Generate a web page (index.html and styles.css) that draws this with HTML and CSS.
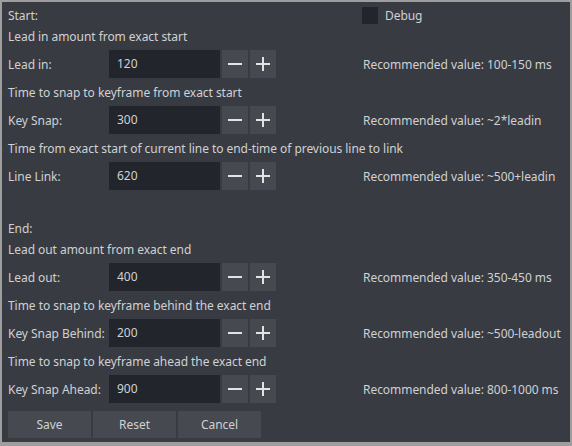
FILE: index.html
```html
<!DOCTYPE html>
<html>
<head>
<meta charset="utf-8">
<link rel="stylesheet" href="styles.css">
</head>
<body>
<div class="panel">
  <div class="head-row">
    <span class="label">Start:</span>
    <span class="check"><span class="box"></span><span class="check-text">Debug</span></span>
  </div>
  <div class="text">Lead in amount from exact start</div>
  <div class="row">
    <span class="label">Lead in:</span>
    <span class="input">120</span>
    <span class="btn"><svg width="14" height="14" viewBox="0 0 14 14"><path d="M0 7H14" stroke="#e2e3e5" stroke-width="2"/></svg></span>
    <span class="btn"><svg width="14" height="14" viewBox="0 0 14 14"><path d="M0 7H14M7 0V14" stroke="#e2e3e5" stroke-width="2"/></svg></span>
    <span class="rec">Recommended value: 100-150 ms</span>
  </div>
  <div class="text">Time to snap to keyframe from exact start</div>
  <div class="row">
    <span class="label">Key Snap:</span>
    <span class="input">300</span>
    <span class="btn"><svg width="14" height="14" viewBox="0 0 14 14"><path d="M0 7H14" stroke="#e2e3e5" stroke-width="2"/></svg></span>
    <span class="btn"><svg width="14" height="14" viewBox="0 0 14 14"><path d="M0 7H14M7 0V14" stroke="#e2e3e5" stroke-width="2"/></svg></span>
    <span class="rec">Recommended value: ~2*leadin</span>
  </div>
  <div class="text">Time from exact start of current line to end-time of previous line to link</div>
  <div class="row">
    <span class="label">Line Link:</span>
    <span class="input">620</span>
    <span class="btn"><svg width="14" height="14" viewBox="0 0 14 14"><path d="M0 7H14" stroke="#e2e3e5" stroke-width="2"/></svg></span>
    <span class="btn"><svg width="14" height="14" viewBox="0 0 14 14"><path d="M0 7H14M7 0V14" stroke="#e2e3e5" stroke-width="2"/></svg></span>
    <span class="rec">Recommended value: ~500+leadin</span>
  </div>
  <div class="spacer"></div>
  <div class="text">End:</div>
  <div class="text gap">Lead out amount from exact end</div>
  <div class="row">
    <span class="label">Lead out:</span>
    <span class="input">400</span>
    <span class="btn"><svg width="14" height="14" viewBox="0 0 14 14"><path d="M0 7H14" stroke="#e2e3e5" stroke-width="2"/></svg></span>
    <span class="btn"><svg width="14" height="14" viewBox="0 0 14 14"><path d="M0 7H14M7 0V14" stroke="#e2e3e5" stroke-width="2"/></svg></span>
    <span class="rec">Recommended value: 350-450 ms</span>
  </div>
  <div class="text">Time to snap to keyframe behind the exact end</div>
  <div class="row">
    <span class="label">Key Snap Behind:</span>
    <span class="input">200</span>
    <span class="btn"><svg width="14" height="14" viewBox="0 0 14 14"><path d="M0 7H14" stroke="#e2e3e5" stroke-width="2"/></svg></span>
    <span class="btn"><svg width="14" height="14" viewBox="0 0 14 14"><path d="M0 7H14M7 0V14" stroke="#e2e3e5" stroke-width="2"/></svg></span>
    <span class="rec">Recommended value: ~500-leadout</span>
  </div>
  <div class="text">Time to snap to keyframe ahead the exact end</div>
  <div class="row">
    <span class="label">Key Snap Ahead:</span>
    <span class="input">900</span>
    <span class="btn"><svg width="14" height="14" viewBox="0 0 14 14"><path d="M0 7H14" stroke="#e2e3e5" stroke-width="2"/></svg></span>
    <span class="btn"><svg width="14" height="14" viewBox="0 0 14 14"><path d="M0 7H14M7 0V14" stroke="#e2e3e5" stroke-width="2"/></svg></span>
    <span class="rec">Recommended value: 800-1000 ms</span>
  </div>
  <div class="actions">
    <span class="action">Save</span>
    <span class="action">Reset</span>
    <span class="action">Cancel</span>
  </div>
</div>
</body>
</html>
```

FILE: styles.css
```css
html, body {
  margin: 0;
  padding: 0;
  background: #9e9e9e;
  width: 572px;
  height: 446px;
  overflow: hidden;
}
body {
  padding: 2px 2px 4px 2px;
  box-sizing: border-box;
  font-family: "Noto Sans", sans-serif;
  font-size: 12px;
  letter-spacing: -0.05px;
  color: #cfd1d4;
}
.panel {
  background: #383b42;
  height: 440px;
  box-sizing: border-box;
  padding: 5px 6px 0 6px;
  display: flex;
  flex-direction: column;
}
.head-row {
  height: 17px;
  line-height: 17px;
  display: flex;
  align-items: center;
}
.head-row .label {
  width: 354px;
}
.check {
  display: flex;
  align-items: center;
}
.box {
  width: 16px;
  height: 17px;
  background: #22252c;
  margin-right: 7px;
}
.text {
  height: 17px;
  line-height: 17px;
  margin-top: 4px;
  white-space: nowrap;
}
.row + .text { margin-top: 0; }
.spacer { height: 24px; }
.spacer + .text { margin-top: 0; }
.row {
  height: 28px;
  margin: 5px 0 6px 0;
  display: flex;
  align-items: center;
  gap: 2px;
}
.row .label {
  width: 99px;
  white-space: nowrap;
}
.input {
  width: 111px;
  height: 28px;
  line-height: 28px;
  box-sizing: border-box;
  padding-left: 8px;
  background: #22252c;
}
.btn {
  width: 26px;
  height: 28px;
  background: #464950;
  display: flex;
  align-items: center;
  justify-content: center;
}
.rec {
  margin-left: 85px;
  white-space: nowrap;
}
.actions {
  display: flex;
  gap: 2px;
  margin-top: 2px;
}
.action {
  width: 83px;
  height: 27px;
  line-height: 27px;
  text-align: center;
  background: #464950;
}
```
